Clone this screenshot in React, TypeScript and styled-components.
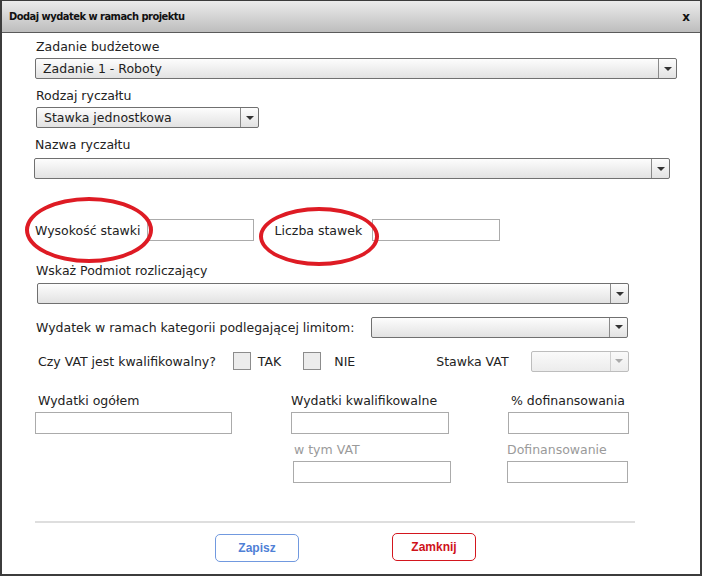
import React from "react"
import styled, { createGlobalStyle } from "styled-components"

const GlobalStyle = createGlobalStyle`
    html, body {
        margin: 0;
        padding: 0;
        background: #ffffff;
    }
    * {
        box-sizing: border-box;
    }
`

const Dialog = styled.div`
    width: 702px;
    height: 576px;
    border: 2px solid #3c3c3c;
    border-top-width: 1px;
    background: #ffffff;
    display: flex;
    flex-direction: column;
    font-family: "DejaVu Sans", Verdana, sans-serif;
    color: #222;
    overflow: hidden;
`

const Header = styled.div`
    height: 32px;
    flex: none;
    display: flex;
    align-items: center;
    justify-content: space-between;
    padding: 0 10px 0 7px;
    background: linear-gradient(#ececec, #bdbdbd);
    border-bottom: 1px solid #5a5a5a;
`

const Title = styled.span`
    font-family: "DejaVu Sans Condensed", "DejaVu Sans", sans-serif;
    font-weight: bold;
    font-size: 11px;
    letter-spacing: -0.5px;
    color: #111;
`

const Close = styled.span`
    font-family: "DejaVu Sans", sans-serif;
    font-weight: bold;
    font-size: 12px;
    color: #111;
`

const Body = styled.div`
    flex: 1;
    padding: 6px 0 0 34px;
    position: relative;
`

const Label = styled.div<{ $ml?: number; $mt?: number; $muted?: boolean }>`
    font-size: 12.5px;
    line-height: 16px;
    margin-left: ${(p) => p.$ml ?? 0}px;
    margin-top: ${(p) => p.$mt ?? 0}px;
    color: ${(p) => (p.$muted ? "#9a9a9a" : "#222")};
    white-space: nowrap;
`

const Select = styled.div<{ $w: number; $ml?: number; $mt?: number; $disabled?: boolean }>`
    display: flex;
    flex: none;
    width: ${(p) => p.$w}px;
    height: 21px;
    margin-left: ${(p) => p.$ml ?? 0}px;
    margin-top: ${(p) => p.$mt ?? 0}px;
    border: 1px solid ${(p) => (p.$disabled ? "#bdbdbd" : "#707070")};
    border-radius: 2px;
    background: ${(p) =>
        p.$disabled ? "linear-gradient(#fafafa, #ececec)" : "linear-gradient(#fdfdfd, #e2e2e2)"};
`

const SelectValue = styled.span`
    flex: 1;
    padding-left: 7px;
    font-size: 12.5px;
    line-height: 19px;
    color: #222;
    white-space: nowrap;
`

const SelectArrow = styled.span<{ $disabled?: boolean }>`
    width: 18px;
    flex: none;
    border-left: 1px solid ${(p) => (p.$disabled ? "#cfcfcf" : "#8a8a8a")};
    display: flex;
    align-items: center;
    justify-content: center;
    &::after {
        content: "";
        border-left: 4px solid transparent;
        border-right: 4px solid transparent;
        border-top: 4px solid ${(p) => (p.$disabled ? "#aaa" : "#333")};
    }
`

const Input = styled.div<{ $w: number; $ml?: number; $mt?: number }>`
    flex: none;
    width: ${(p) => p.$w}px;
    height: 22px;
    margin-left: ${(p) => p.$ml ?? 0}px;
    margin-top: ${(p) => p.$mt ?? 0}px;
    border: 1px solid #ababab;
    background: #fff;
`

const Row = styled.div<{ $mt?: number; $h?: number }>`
    display: flex;
    align-items: center;
    height: ${(p) => p.$h ?? 22}px;
    margin-top: ${(p) => p.$mt ?? 0}px;
`

const Inline = styled.span<{ $ml?: number }>`
    font-size: 12.5px;
    margin-left: ${(p) => p.$ml ?? 0}px;
    white-space: nowrap;
`

const Check = styled.span<{ $ml?: number }>`
    width: 18px;
    height: 18px;
    margin-left: ${(p) => p.$ml ?? 0}px;
    border: 1px solid #8c8c8c;
    background: #ececec;
    flex: none;
`

const Ring = styled.span<{ $x: number; $y: number; $w: number; $h: number }>`
    position: absolute;
    left: ${(p) => p.$x}px;
    top: ${(p) => p.$y}px;
    width: ${(p) => p.$w}px;
    height: ${(p) => p.$h}px;
    border: 4px solid #de1b24;
    border-radius: 50%;
    pointer-events: none;
`

const Amounts = styled.div`
    display: grid;
    grid-template-columns: 255px 217px 1fr;
    margin-top: 22px;
`

const Cell = styled.div`
    display: flex;
    flex-direction: column;
`

const Divider = styled.div`
    width: 600px;
    height: 2px;
    margin-left: -1px;
    background: #dedede;
    margin-top: 38px;
`

const Footer = styled.div`
    display: flex;
    justify-content: center;
    gap: 93px;
    padding-right: 45px;
    margin-top: 10px;
`

const Button = styled.button<{ $tone: "blue" | "red" }>`
    width: 84px;
    height: 28px;
    border-radius: 5px;
    background: #fff;
    border: 1px solid ${(p) => (p.$tone === "blue" ? "#7199df" : "#d3161e")};
    color: ${(p) => (p.$tone === "blue" ? "#4f80d6" : "#cf121a")};
    font-family: "Liberation Sans", Arial, sans-serif;
    font-weight: bold;
    font-size: 12px;
    padding: 0;
    margin-top: ${(p) => (p.$tone === "blue" ? 1 : 0)}px;
`

export default function App() {
    return (
        <>
            <GlobalStyle />
            <Dialog>
                <Header>
                    <Title>Dodaj wydatek w ramach projektu</Title>
                    <Close>x</Close>
                </Header>
                <Body>
                    <Ring $x={23} $y={164} $w={128} $h={66} />
                    <Ring $x={257} $y={174} $w={120} $h={59} />

                    <Label>Zadanie budżetowe</Label>
                    <Select $w={642} $ml={-1} $mt={3}>
                        <SelectValue>Zadanie 1 - Roboty</SelectValue>
                        <SelectArrow />
                    </Select>

                    <Label $mt={9}>Rodzaj ryczałtu</Label>
                    <Select $w={223} $mt={3}>
                        <SelectValue>Stawka jednostkowa</SelectValue>
                        <SelectArrow />
                    </Select>

                    <Label $ml={-1} $mt={9}>Nazwa ryczałtu</Label>
                    <Select $w={636} $ml={-2} $mt={5}>
                        <SelectValue />
                        <SelectArrow />
                    </Select>

                    <Row $mt={40}>
                        <Inline $ml={-1}>Wysokość stawki</Inline>
                        <Input $w={107} $ml={6} />
                        <Inline $ml={21}>Liczba stawek</Inline>
                        <Input $w={128} $ml={10} />
                    </Row>

                    <Label $mt={22}>Wskaż Podmiot rozliczający</Label>
                    <Select $w={592} $ml={1} $mt={4}>
                        <SelectValue />
                        <SelectArrow />
                    </Select>

                    <Row $mt={12}>
                        <Inline>Wydatek w ramach kategorii podlegającej limitom:</Inline>
                        <Select $w={257} $ml={17}>
                            <SelectValue />
                            <SelectArrow />
                        </Select>
                    </Row>

                    <Row $mt={13} $h={20}>
                        <Inline $ml={2}>Czy VAT jest kwalifikowalny?</Inline>
                        <Check $ml={17} />
                        <Inline $ml={7}>TAK</Inline>
                        <Check $ml={22} />
                        <Inline $ml={13}>NIE</Inline>
                        <Inline $ml={81}>Stawka VAT</Inline>
                        <Select $w={98} $ml={22} $disabled>
                            <SelectValue />
                            <SelectArrow $disabled />
                        </Select>
                    </Row>

                    <Amounts>
                        <Cell>
                            <Label $ml={2}>Wydatki ogółem</Label>
                            <Input $w={197} $ml={-1} $mt={3} />
                        </Cell>
                        <Cell>
                            <Label>Wydatki kwalifikowalne</Label>
                            <Input $w={158} $mt={3} />
                        </Cell>
                        <Cell>
                            <Label $ml={3}>% dofinansowania</Label>
                            <Input $w={121} $mt={3} />
                        </Cell>
                        <Cell />
                        <Cell>
                            <Label $ml={3} $mt={8} $muted>w tym VAT</Label>
                            <Input $w={158} $ml={2} $mt={3} />
                        </Cell>
                        <Cell>
                            <Label $ml={-1} $mt={8} $muted>Dofinansowanie</Label>
                            <Input $w={121} $ml={-1} $mt={3} />
                        </Cell>
                    </Amounts>

                    <Divider />

                    <Footer>
                        <Button $tone="blue">Zapisz</Button>
                        <Button $tone="red">Zamknij</Button>
                    </Footer>
                </Body>
            </Dialog>
        </>
    )
}
